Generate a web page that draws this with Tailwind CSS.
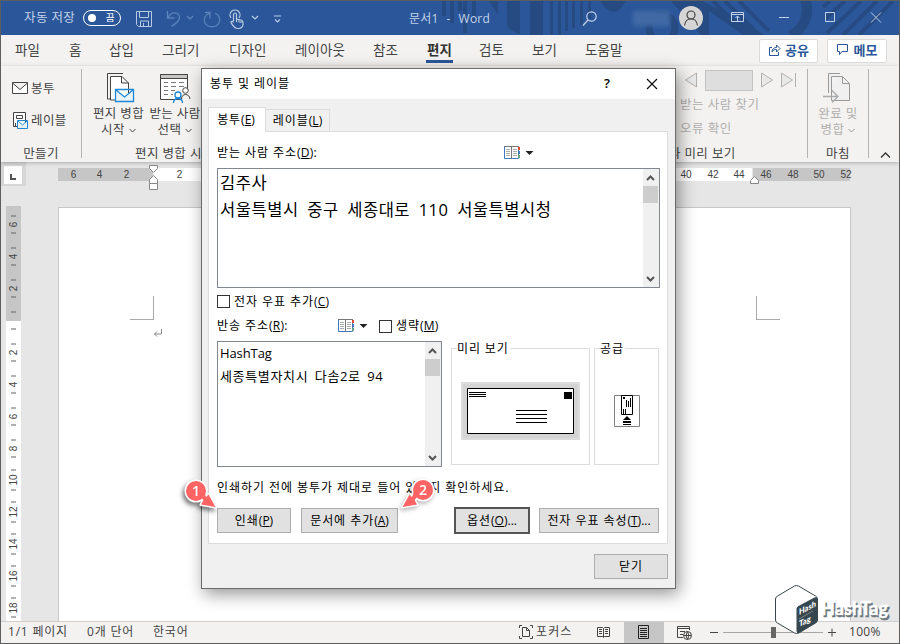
<!DOCTYPE html>
<html lang="ko">
<head>
<meta charset="utf-8">
<title>문서1 - Word</title>
<script src="https://cdn.jsdelivr.net/npm/@tailwindcss/browser@4"></script>
</head>
<body class="w-[900px] h-[644px] overflow-hidden">
<div class="relative w-[900px] h-[644px] overflow-hidden flex flex-col border border-[#5e5e5e] bg-[#e6e6e6] font-['Open_Sans','Noto_Sans_CJK_KR',sans-serif] text-[12.5px] leading-[16px] tracking-[0.4px] text-[#444]">

  <!-- title bar -->
  <header class="relative h-[34px] shrink-0 bg-[#2b579a] text-[#c3d2e8]">
    <svg class="absolute inset-0" width="898" height="34" fill="#264b82">
      <path d="M441 0h4v15h-4zM449 0h4v22h-4zM457 0h4v10h-4zM462 0h4v32h-4zM471 0h4v20h-4zM488 0h9v14zM506 0h13v33q-9-3-13-8zM529 0h13v34h-13zM549 0h3v34h-3zM557 0h3v34h-3zM564 0h3v30h-3zM571 0h3v27h-3zM579 0h3v24h-3zM587 0h3v18h-3zM599 0h26q-12 22-26 0z"/>
      <circle cx="661" cy="27" r="13" fill="none" stroke="#264b82" stroke-width="7"/>
      <path d="M670 0h32l62 34h-22L708 10v24h-8z"/>
      <g fill="none" stroke="#264b82" stroke-width="4"><path d="M712 0l34 34M724 0l34 34M738 0l30 30"/><path d="M803-5q10 25-13 40" stroke-width="10"/><path d="M822 6l7-6M824 18l20-18M826 32l34-32M842 34l34-34M858 34l34-34"/></g>
    </svg>
    <div class="relative flex items-center h-full">
      <div class="w-[82px] shrink-0 pl-[23px] text-[12.5px] whitespace-nowrap">자동 저장</div>
      <div class="w-[38px] shrink-0 h-[16px] rounded-full border border-white flex items-center justify-between pl-[4px] pr-[5px] text-white">
        <span class="size-[8px] rounded-full bg-white"></span><span class="text-[9.5px] leading-[12px]">끔</span>
      </div>
      <svg class="ml-[14px] shrink-0" width="170" height="24" viewBox="0 0 170 24" fill="none" stroke="#b9cbe4">
        <path d="M1.500 5.500h15v15h-13l-2-2zM4.500 5.500v6h9v-6M5.500 20v-5h8v5M8.500 20v-3"/>
        <g stroke="#5b82bb" stroke-width="1.300"><path d="M32.500 5v7h7M33 11.500c4-7 11-5 11.500-.5.500 3-2 5-8 9.500M52 10l3 3 3-3"/><path d="M70 6.500h5v6M75 7c-5 2-7 6-5 10 3 5 11 5 14 0 2-4 0-8-4-10"/></g>
        <path d="M98.500 15V8.500c0-2 3-2 3 0V13l4.500 1c1 .2 2 1 2 2.500v2c0 2-2 4-4 4h-2c-2 0-5-4-6-6 0-1 1.500-2 2.500 0M96 12a5 5 0 1 1 8 0M101.500 13v3M104 14v2.500M106 15v2M117 10l3 3 3-3M139 10h7M140 13.500l2.500 2.500 2.500-2.500" stroke-width="1.200"/>
      </svg>
      <div class="ml-[104px] w-[173px] shrink-0 pt-[1px] text-[12px] tracking-[0.2px] flex gap-[8px]"><span>문서1</span><span>-</span><span>Word</span></div>
      <svg class="shrink-0" width="16" height="17" viewBox="0 0 16 17" fill="none" stroke="#c3d2e8" stroke-width="1.200"><circle cx="9.500" cy="6.500" r="4.700"/><path d="M6 10l-5 5.500"/></svg>
      <div class="ml-[35px] w-[37px] shrink-0 h-[15px] bg-[#416aa5] blur-[2px]"></div>
      <div class="ml-[9px] size-[24px] shrink-0 rounded-full bg-[#d5d5d5] flex justify-center items-center">
        <svg width="16" height="18" viewBox="0 0 16 18" fill="none" stroke="#444" stroke-width="1.200"><circle cx="8" cy="6" r="4"/><path d="M1.500 16.500c1-9 12-9 13 0"/></svg>
      </div>
      <svg class="ml-[26px] shrink-0" width="168" height="24" viewBox="0 0 168 24" fill="none" stroke="#c3d2e8">
        <path d="M2.500 6.500h12v9h-12zM2.500 8.500h12M8.500 15v-5M6.500 12l2-2 2 2M50 11.500h10M96.500 6.500h9v9h-9zM142 6.500l10 10M152 6.500l-10 10"/>
      </svg>
    </div>
  </header>

  <!-- ribbon tabs -->
  <nav class="h-[31px] shrink-0 bg-[#f3f2f1] flex items-center pl-[14px] text-[13.5px] leading-[18px] tracking-[0.1px] whitespace-nowrap">
    <div class="flex h-full pt-[6px]">
    <span class="w-[54px]">파일</span><span class="w-[40px]">홈</span><span class="w-[53px]">삽입</span><span class="w-[67px]">그리기</span><span class="w-[66px]">디자인</span><span class="w-[78px]">레이아웃</span><span class="w-[53px]">참조</span>
    <span class="w-[53px]"><b class="inline-flex h-[22px] border-b-[3px] border-[#2b579a] font-bold text-[#333] px-px">편지</b></span>
    <span class="w-[53px]">검토</span><span class="w-[53px]">보기</span><span class="w-[174px]">도움말</span>
    </div>
    <span class="w-[59px] h-[24px] rounded-[2px] border border-[#dcdad8] bg-white text-[#2b579a] font-bold text-[13px] flex items-center justify-center gap-[4px] pb-[2px]">
      <svg width="13" height="14" viewBox="0 0 13 14" fill="none" stroke="#2b579a"><path d="M4 4.500H1.500v8h9V9M4 9c0-3 2-4.500 4.500-4.500V2l3.500 3.500L8.500 9V6.500C6.500 6.500 5 7 4 9z"/></svg>공유</span>
    <span class="ml-[9px] w-[60px] h-[24px] rounded-[2px] border border-[#dcdad8] bg-white text-[#2b579a] font-bold text-[13px] flex items-center justify-center gap-[4px] pb-[2px]">
      <svg width="13" height="13" viewBox="0 0 13 13" fill="none" stroke="#2b579a"><path d="M1.500 1.500h10v7H6l-2.500 3v-3h-2z"/></svg>메모</span>
  </nav>

  <!-- ribbon -->
  <section class="relative z-10 h-[96px] shrink-0 bg-[#f3f2f1] flex pt-[3px] shadow-[0_1px_4px_rgba(0,0,0,0.25)] whitespace-nowrap">
    <div class="w-[81px] h-[89px] border-r border-[#b5b3b1] flex flex-col pl-[11px]">
      <div class="flex items-center gap-[3px] h-[38px] shrink-0"><svg width="16" height="13" viewBox="0 0 16 13" fill="#fff" stroke="#444"><path d="M.5.500h15v11H.500zM.500 1L8 7.500 15.500 1"/></svg><span class="pt-[1px]">봉투</span></div>
      <div class="flex items-center gap-[3px] h-[26px] shrink-0"><svg width="16" height="17" viewBox="0 0 16 17" fill="#fff" stroke="#444"><path d="M1.500.500h12v14h-12zM4.500 3.500h6v3h-6zM3.500 11v4"/><path d="M5.500 8.500h10v8h-10zM6 9l4.500 4L15 9" fill="#e9f4fc" stroke="#1e87d6"/></svg><span class="pt-[1px]">레이블</span></div>
      <div class="mt-[13px] h-[16px] shrink-0 text-center pr-[11px]">만들기</div>
    </div>
    <div class="relative w-[520px] flex">
      <div class="w-[73px] pt-[3px] flex flex-col items-center">
        <svg class="shrink-0 ml-[4px]" width="29" height="32" viewBox="0 0 29 32" fill="#fff" stroke="#444"><path d="M17 1.500H1.500V27H4" fill="none"/><path d="M4.500 4.500H16l6.500 6.500v17h-18zM15.500 4.500V11h7"/><path d="M9.500 17.500h18v12h-18zM10 18l8.500 7L27 18" fill="#e9f4fc" stroke="#1e87d6" stroke-width="1.300"/></svg>
        <span class="mt-[2px]">편지 병합</span>
        <span class="flex items-center gap-[4px]">시작<svg width="7" height="5" fill="none" stroke="#444"><path d="M.5 1l3 3 3-3"/></svg></span>
      </div>
      <div class="w-[40px] flex flex-col items-center pt-[3px]">
        <svg class="shrink-0" width="32" height="32" viewBox="0 0 32 32" fill="#fff" stroke="#444"><path d="M1.500 2.500h27v25h-27z"/><path d="M1.500 2.500h27v4h-27z" fill="#c8c6c4"/><path d="M5 10.500h4m3 0h5m3 0h5M5 14.500h4m3 0h5m3 0h5M5 18.500h4m3 0h4M5 22.500h4m3 0h2" stroke="#777"/><path d="M22 28v2h10V17H17z" stroke="none" fill="#f3f2f1"/><circle cx="26.500" cy="18.500" r="2.800"/><path d="M22.500 27c0-6 8-6 8.500 0" fill="none"/><g stroke="#1e87d6" stroke-width="1.300"><circle cx="19" cy="23" r="3"/><path d="M14.500 31c0-6 9-6 9 0" fill="none"/></g></svg>
        <span class="mt-[2px]">받는 사람</span>
        <span class="flex items-center gap-[4px]">선택<svg width="7" height="5" fill="none" stroke="#444"><path d="M.5 1l3 3 3-3"/></svg></span>
      </div>
      <div class="absolute left-[53px] top-[77px]">편지 병합 시작</div>
    </div>
    <div class="w-[206px] h-[89px] border-r border-[#b5b3b1] flex flex-col pl-[68px] text-[#b1afad]">
      <div class="flex h-[22px] shrink-0 items-center pl-[14px]">
        <svg width="14" height="16" fill="#e8e8e8" stroke="#b1b1b1"><path d="M12.500 1v14L1.500 8z"/></svg>
        <span class="ml-[7px] w-[48px] h-[21px] border border-[#c3c3c3] bg-[#dedede]"></span>
        <svg class="ml-[7px]" width="38" height="16" fill="#e8e8e8" stroke="#b1b1b1"><path d="M1.500 1v14l11-7zM21.500 1v14l11-7zM35.500 1v14"/></svg>
      </div>
      <div class="pl-[10px] mt-[4px] h-[18px] shrink-0 tracking-[0.5px] leading-[20px]">받는 사람 찾기</div>
      <div class="pl-[10px] mt-[6px] h-[18px] shrink-0 tracking-[0.5px] leading-[20px]">오류 확인</div>
      <div class="mt-[9px] h-[16px] shrink-0 text-[#444] -ml-[13px]">결과 미리 보기</div>
    </div>
    <div class="w-[61px] h-[89px] border-r border-[#b5b3b1] flex flex-col items-center text-[#b1afad] pt-[3px]">
      <svg class="-ml-[3px] shrink-0" width="30" height="32" viewBox="0 0 30 32" fill="#f0f0f0" stroke="#999"><path d="M18 1.500H6.500V21M9.500 28.500V4.500h11l7 7v17zM20.500 4.500v7h7"/><path d="M1 24.500h15M10 18.500l6 6-6 6" fill="none" stroke="#aaa" stroke-width="1.300"/></svg>
      <span class="mt-[2px]">완료 및</span>
      <span class="flex items-center gap-[4px]">병합<svg width="7" height="5" fill="none" stroke="#999"><path d="M.5 1l3 3 3-3"/></svg></span>
      <span class="mt-[8px] text-[#444]">마침</span>
    </div>
    <svg class="ml-[11px] mt-[82px]" width="11" height="8" fill="none" stroke="#333" stroke-width="1.300"><path d="M1 6.500L5.500 2 10 6.500"/></svg>
  </section>

  <!-- document area -->
  <main class="relative h-[459px] shrink-0 flex">
    <div class="w-[57px] shrink-0">
      <div class="w-[25px] h-[24px] bg-[#d6d6d6] p-[3px] pt-[4px]"><div class="size-[18px] bg-[#fdfdfd] flex items-center justify-center"><span class="size-[6px] border-l-2 border-b-2 border-[#555] mt-[3px]"></span></div></div>
      <svg class="mt-[20px] ml-[5px]" width="15" height="415" viewBox="0 0 15 415" font-family="Liberation Sans" font-size="10" letter-spacing="0" fill="#444" text-anchor="middle">
        <path d="M0 0h15v115H0z" fill="#c6c6c6"/><path d="M0 115h15v300H0z" fill="#fff"/>
        <path d="M5 10h5M5 27h5M5 42h5M5 59h5M5 74h5M5 91h5M5 106h5M5 123h5M5 138h5M5 155h5M5 170h5M5 187h5M5 202h5M5 219h5M5 234h5M5 251h5M5 264h5M5 284h5M5 296h5M5 316h5M5 328h5M5 348h5M5 360h5M5 380h5M5 392h5M5 411h5" stroke="#666"/>
        <g><text transform="translate(11 18.500)rotate(-90)">6</text><text transform="translate(11 50.500)rotate(-90)">4</text><text transform="translate(11 82.500)rotate(-90)">2</text><text transform="translate(11 146.500)rotate(-90)">2</text><text transform="translate(11 178.500)rotate(-90)">4</text><text transform="translate(11 210.500)rotate(-90)">6</text><text transform="translate(11 242.500)rotate(-90)">8</text><text transform="translate(11 274)rotate(-90)">10</text><text transform="translate(11 306)rotate(-90)">12</text><text transform="translate(11 338)rotate(-90)">14</text><text transform="translate(11 370)rotate(-90)">16</text><text transform="translate(11 402)rotate(-90)">18</text></g>
      </svg>
    </div>
    <div class="w-[795px] flex flex-col">
      <svg class="shrink-0" width="796" height="45" viewBox="58 162 796 45" font-family="Liberation Sans" font-size="10" letter-spacing="0" fill="#444" text-anchor="middle">
        <path d="M57 168h96v13H57zM753 168h97v13h-97z" fill="#c6c6c6"/><path d="M153 168h599v13H153z" fill="#fff"/>
        <text x="73.500" y="178">6</text><text x="99.500" y="178">4</text><text x="126.500" y="178">2</text><text x="179.500" y="178">2</text><text x="686" y="178">40</text><text x="713" y="178">42</text><text x="739" y="178">44</text><text x="766" y="178">46</text><text x="793" y="178">48</text><text x="819" y="178">50</text><text x="846" y="178">52</text>
        <path d="M149.500 165.500h8v3l-4 4-4-4zM149.500 183.500v-4l4-4 4 4v4zM149.500 183.500h8v6h-8zM750.500 183.500v-3l4-4 4 4v3z" fill="#fff" stroke="#888"/>
      </svg>
      <div class="flex-1 bg-white border border-b-0 border-[#c8c8c8] w-[793px] shrink-0 h-[414px] flex justify-between pl-[71px] pr-[70px] pt-[88px]">
        <div class="flex flex-col items-end"><span class="w-[24px] h-[24px] border-r border-b border-[#aaa]"></span><svg class="-mr-[9px] mt-[9px]" width="10" height="9" fill="none" stroke="#888"><path d="M8.500 0v5h-7M4 2.500L1.500 5 4 7.500"/></svg></div>
        <span class="w-[24px] h-[24px] border-l border-b border-[#aaa]"></span>
      </div>
    </div>
  </main>

  <!-- status bar -->
  <footer class="h-[22px] shrink-0 bg-[#f3f2f1] border-t border-[#d0cecc] flex items-center whitespace-nowrap text-[12px] tracking-[0.5px] pb-px">
    <span class="w-[79px] pl-[7px] shrink-0 tracking-[0.8px]">1/1 페이지</span><span class="w-[66px] pl-[7px] shrink-0 tracking-[0.8px]">0개 단어</span><span class="w-[373px] pl-[7px] shrink-0 tracking-[0.8px]">한국어</span>
    <svg class="shrink-0" width="14" height="14" viewBox="0 0 14 14" fill="none" stroke="#444"><path d="M3 .500H.500V3M11 .500h2.500V3M.500 11v2.500H3M13.500 11v2.500H11M3.500 2.500h4l3 3v6h-7zM7.500 2.500v3h3"/></svg>
    <span class="w-[64px] shrink-0 pl-[3px] tracking-[1.1px]">포커스</span>
    <svg class="shrink-0" width="13" height="13" viewBox="0 0 13 13" fill="none" stroke="#444"><path d="M.500 1.500h5l1 1 1-1h5v9h-5l-1 1-1-1h-5zM6.500 2v9M2 3.500h3M2 5.500h3M2 7.500h3M8 3.500h3M8 5.500h3M8 7.500h3"/></svg>
    <span class="ml-[14px] w-[40px] shrink-0 self-stretch -mb-px bg-[#c6c6c6] flex items-center justify-center"><svg class="-mt-px -ml-px" width="11" height="14" fill="none" stroke="#222"><path d="M.500.500h10v13H.500zM2 3.500h7M2 5.500h7M2 7.500h7M2 9.500h7M2 11.500h7"/></svg></span>
    <svg class="ml-[13px] shrink-0" width="15" height="15" viewBox="0 0 15 15" fill="none" stroke="#444"><path d="M12.500 5V1.500H.500v11H6M.500 3.500h12M3 6.500h5M3 9.500h3"/><circle cx="10.500" cy="10.500" r="4"/><path d="M6.500 10.500h8M10.500 6.500q-3 4 0 8q3-4 0-8"/></svg>
    <svg class="ml-[18px] shrink-0" width="128" height="14" fill="none" stroke="#444"><path d="M0 7.500h8M118 7.500h8M122 3.500v8"/><path d="M13 7.500h100" stroke="#a5a5a5"/><path d="M61 2h5v11h-5z" fill="#666" stroke="none"/></svg>
    <span class="ml-[11px] tracking-[0.3px]">100%</span>
  </footer>

  <!-- envelope dialog -->
  <div class="absolute z-20 left-[200px] top-[67px] w-[475px] h-[521px] border border-[#6b6b6b] bg-[#f0f0f0] shadow-[3px_5px_16px_rgba(0,0,0,0.42)] flex flex-col text-black text-[12px] tracking-[0.95px] whitespace-nowrap">
    <div class="h-[30px] shrink-0 bg-white flex items-center pl-[8px]">
      <span class="flex-1">봉투 및 레이블</span>
      <span class="w-[42px] pb-[2px] text-[13px] font-semibold">?</span>
      <svg class="mr-[17px]" width="12" height="12" stroke="#111" stroke-width="1.200"><path d="M1 1l10 10M11 1L1 11"/></svg>
    </div>
    <div class="h-[32px] shrink-0 pt-[8px] pl-[6px] flex items-end">
      <div class="relative z-10 -mb-px w-[58px] h-[25px] bg-white border border-b-0 border-[#dcdcdc] flex items-center justify-center pr-[2px]"><span>봉투<span class="tracking-normal">(<u>E</u>)</span></span></div>
      <div class="w-[64px] h-[22px] border border-l-0 border-b-0 border-[#dcdcdc] flex items-center justify-center pt-[1px]"><span>레이블<span class="tracking-normal">(<u>L</u>)</span></span></div>
    </div>
    <div class="ml-[6px] w-[460px] h-[413px] shrink-0 border border-[#dcdcdc] bg-white pl-[8px] flex flex-col">
      <div class="h-[36px] pt-[5px] flex items-center">
        <span class="w-[287px]">받는 사람 주소<span class="tracking-[0.2px]">(<u>D</u>):</span></span>
        <svg width="32" height="14" viewBox="0 0 32 14" fill="none"><path d="M.500.500h14v12H.500z" stroke="#3f78bd"/><path d="M0 .500h15M7.500 1v12" stroke="#777"/><path d="M2 3.500h4M2 5.500h4M2 7.500h4M2 9.500h4M9 3.500h4M9 5.500h4M9 7.500h4M9 9.500h4" stroke="#aaa"/><path d="M14 1h2v3h-2z" fill="#dd4b2f"/><path d="M14 5h2v3h-2z" fill="#3f78bd"/><path d="M14 9h2v3h-2z" fill="#5fa383"/><path d="M21.500 5h8l-4 4z" fill="#222"/></svg>
      </div>
      <div class="w-[443px] h-[120px] shrink-0 border border-[#828790] flex">
        <div class="flex-1 pl-[2px] text-[16.5px] leading-[27px] tracking-[0.55px] [word-spacing:3.7px]">김주사<br>서울특별시 중구 세종대로 110 서울특별시청</div>
        <div class="w-[16px] pr-px bg-[#f0f0f0] flex flex-col items-center"><svg class="mt-[6px]" width="9" height="6" fill="none" stroke="#555" stroke-width="2"><path d="M1 5l3.500-3.500L8 5"/></svg><span class="mt-[5px] w-[15px] h-[17px] bg-[#cdcdcd]"></span><svg class="mt-auto mb-[5px]" width="9" height="6" fill="none" stroke="#555" stroke-width="2"><path d="M1 1l3.500 3.500L8 1"/></svg></div>
      </div>
      <div class="h-[26px] shrink-0 flex items-center gap-[4px]"><span class="size-[13px] border border-[#333]"></span><span class="pt-[1px]">전자 우표 추가<span class="tracking-[0.2px]">(<u>C</u>)</span></span></div>
      <div class="h-[24px] shrink-0 flex items-center">
        <span class="w-[121px]">반송 주소<span class="tracking-[0.2px]">(<u>R</u>):</span></span>
        <svg width="41" height="14" viewBox="0 0 41 14" fill="none"><path d="M.500.500h14v12H.500z" stroke="#3f78bd"/><path d="M0 .500h15M7.500 1v12" stroke="#777"/><path d="M2 3.500h4M2 5.500h4M2 7.500h4M2 9.500h4M9 3.500h4M9 5.500h4M9 7.500h4M9 9.500h4" stroke="#aaa"/><path d="M14 1h2v3h-2z" fill="#dd4b2f"/><path d="M14 5h2v3h-2z" fill="#3f78bd"/><path d="M14 9h2v3h-2z" fill="#5fa383"/><path d="M21.500 5h8l-4 4z" fill="#222"/></svg>
        <span class="size-[13px] border border-[#333] mr-[4px]"></span><span>생략<span class="tracking-[0.2px]">(<u>M</u>)</span></span>
      </div>
      <div class="h-[129px] shrink-0 flex pt-[3px]">
        <div class="w-[225px] h-[126px] border border-[#828790] flex">
          <div class="flex-1 pl-[2px] text-[13px] leading-[22.500px] tracking-[0.65px] [word-spacing:2.5px]"><span class="tracking-[-0.1px]">HashTag</span><br>세종특별자치시 다솜2로 94</div>
          <div class="w-[16px] pr-px bg-[#f0f0f0] flex flex-col items-center"><svg class="mt-[6px]" width="9" height="6" fill="none" stroke="#555" stroke-width="2"><path d="M1 5l3.500-3.500L8 5"/></svg><span class="mt-[5px] w-[15px] h-[17px] bg-[#cdcdcd]"></span><svg class="mt-auto mb-[5px]" width="9" height="6" fill="none" stroke="#555" stroke-width="2"><path d="M1 1l3.500 3.500L8 1"/></svg></div>
        </div>
        <div class="ml-[9px] mt-[7px] w-[139px] h-[117px] border border-[#dcdcdc] flex flex-col items-start">
          <span class="-mt-[8px] h-[15px] ml-[5px] bg-white pr-px tracking-[0.85px]">미리 보기</span>
          <div class="ml-[9px] mt-[26px] w-[119px] h-[58px] bg-[#d4d4d4] border-2 border-[#dcdcdc] flex items-center justify-center">
            <svg width="107" height="46"><path d="M.500.500h106v45H.500z" fill="#fff" stroke="#000"/><path d="M2 4.500h17M2 6.500h17M2 8.500h17M49 22.500h31M49 26.500h31M49 30.500h31M49 34.500h31" stroke="#000"/><path d="M97 4h8v7h-8z"/></svg>
          </div>
        </div>
        <div class="ml-[4px] mt-[7px] w-[65px] h-[117px] border border-[#dcdcdc] flex flex-col items-start">
          <span class="-mt-[8px] h-[15px] ml-[5px] bg-white pr-px">공급</span>
          <svg class="ml-[19px] mt-[39px]" width="26" height="32" fill="none" stroke="#808080"><path d="M.500.500h25v31H.500z"/><path d="M7.500.500h11v19h-11zM9.500 14v5M11.500 14v5M12.500 5v7M14.500 6v6M16.500 3v9" stroke="#000"/><path d="M9 2h2v2H9zM13 21l4 4H9zM9 26h8v2H9zM9 29h8v1H9z" fill="#000" stroke="none"/></svg>
        </div>
      </div>
      <div class="h-[40px] shrink-0 flex items-center pt-[2px]">인쇄하기 전에 봉투가 제대로 들어 있는지 확인하세요.</div>
      <div class="flex shrink-0 items-center h-[27px]">
        <span class="w-[74px] h-[25px] border border-[#adadad] bg-[#e1e1e1] flex items-center justify-center"><span>인쇄<span class="tracking-normal">(<u>P</u>)</span></span></span>
        <span class="ml-[10px] w-[97px] h-[25px] border border-[#adadad] bg-[#e1e1e1] flex items-center justify-center"><span>문서에 추가<span class="tracking-normal">(<u>A</u>)</span></span></span>
        <span class="ml-[56px] w-[76px] h-[27px] border-2 border-[#555] bg-[#e1e1e1] flex items-center justify-center"><span>옵션<span class="tracking-normal">(<u>O</u>)...</span></span></span>
        <span class="ml-[9px] w-[120px] h-[25px] border border-[#adadad] bg-[#e1e1e1] flex items-center justify-center"><span>전자 우표 속성<span class="tracking-normal">(<u>T</u>)...</span></span></span>
      </div>
    </div>
    <div class="flex justify-end pt-[10px] pr-[7px]"><span class="w-[74px] h-[25px] border border-[#adadad] bg-[#e1e1e1] flex items-center justify-center">닫기</span></div>
  </div>

  <!-- numbered callouts -->
  <svg class="absolute z-30 left-[179px] top-[474px] drop-shadow-[-2px_3px_2px_rgba(0,0,0,0.5)]" width="40" height="40" viewBox="180 475 40 40"><g fill="#ff6464" stroke="#fff" stroke-width="3" stroke-linejoin="round"><circle cx="196" cy="491" r="10"/><path d="M208.500 494.500L215.500 507 201 504.500 203.500 500 200 496l4-4 2 5z"/></g><g fill="#ff6464"><circle cx="196" cy="491" r="10"/><path d="M208.500 494.500L215.500 507 201 504.500 203.500 500 200 496l4-4 2 5z"/></g><text x="196" y="496" text-anchor="middle" font-family="Open Sans" font-size="14" font-weight="600" letter-spacing="0" fill="#fff">1</text></svg>
  <svg class="absolute z-30 left-[397px] top-[474px] drop-shadow-[-1px_2px_2px_rgba(0,0,0,0.3)]" width="40" height="40" viewBox="398 475 40 40"><g fill="#ff6464" stroke="#fff" stroke-width="3" stroke-linejoin="round"><circle cx="423" cy="490" r="10"/><path d="M409.500 494.500L402.500 507 417 504.500 414.500 500 418 496l-4-4-2 5z"/></g><g fill="#ff6464"><circle cx="423" cy="490" r="10"/><path d="M409.500 494.500L402.500 507 417 504.500 414.500 500 418 496l-4-4-2 5z"/></g><text x="423" y="495" text-anchor="middle" font-family="Open Sans" font-size="14" font-weight="600" letter-spacing="0" fill="#fff">2</text></svg>

  <!-- watermark -->
  <svg class="absolute z-30 left-[773px] top-[582px]" width="122" height="56" viewBox="774 583 122 56" letter-spacing="0">
    <path d="M794.500 586q2-1 4 0l17 10q2 1 2 3v21q0 2-2 3l-17 10q-2 1-4 0l-17-10q-2-1-2-3v-21q0-2 2-3z" fill="#fff" stroke="#3b474b"/>
    <path d="M796.500 609q0-2 2-3l16-8.500q3-1 3 2V620q0 2-2 3l-16 10q-3 1-3-2z" fill="#37474f"/>
    <g font-family="Lato" font-weight="900" font-size="8.500" fill="#fff"><text transform="matrix(.87 -.44 0 1 799 615)">Hash</text><text transform="matrix(.9 -.44 0 1 799 627)">Tag</text></g>
    <path d="M799 619l14-8" stroke="#aaa" stroke-width=".6"/>
    <g font-family="Lato" font-weight="900" font-size="18"><text x="822.500" y="616.500" fill="#6a757b" stroke="#6a757b" stroke-width=".6" textLength="67">HashTag</text><text x="821" y="615" fill="#fff" stroke="#fff" stroke-width=".3" textLength="67">HashTag</text></g>
  </svg>
</div>
</body>
</html>
